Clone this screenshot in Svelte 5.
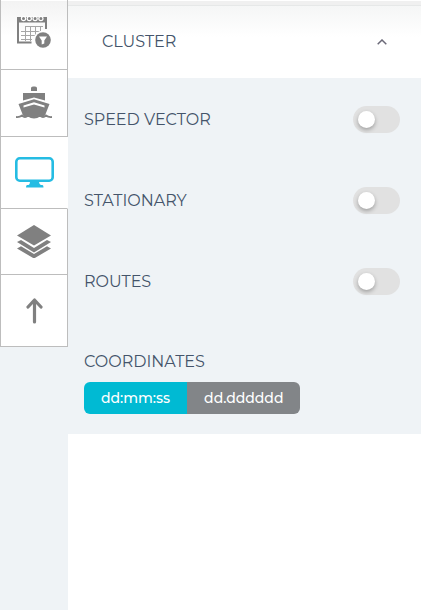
<script>
  let open = $state(true);
  let format = $state('dms');
  let layers = $state([
    { id: 'speed', label: 'SPEED VECTOR', on: false },
    { id: 'stationary', label: 'STATIONARY', on: false },
    { id: 'routes', label: 'ROUTES', on: false }
  ]);
</script>

<div class="app">
  <nav class="rail" aria-label="Map tools">
    <button class="tool date" aria-label="Date filter">
      <svg width="34" height="38" viewBox="0 0 34 38" fill="none">
        <path d="M1 2V26.500H14.500M29 3V13" stroke="#808080" stroke-width="2" />
        <path d="M0 1H30V6.500H0Z" fill="#808080" />
        <g fill="#808080" stroke="#fff" stroke-width="1.200">
          <circle cx="6.500" cy="2.500" r="2.100" />
          <circle cx="12.300" cy="2.500" r="2.100" />
          <circle cx="18.100" cy="2.500" r="2.100" />
          <circle cx="23.900" cy="2.500" r="2.100" />
        </g>
        <path d="M9 10.500H26M4 15.500H26M4 19.500H18M4 23.500H15M8.500 10V25M13.500 10V25M18.500 10V19M23.500 10V16" stroke="#a6a6a6" />
        <circle cx="26" cy="24" r="9.500" fill="#fff" />
        <circle cx="26" cy="24" r="7.800" fill="#808080" />
        <path d="M22 20.500H30L27.300 24.500V27.500L24.700 28.500V24.500Z" fill="#fff" />
      </svg>
    </button>
    <button class="tool ship" aria-label="Vessels">
      <svg width="36" height="34" viewBox="0 0 36 34" fill="#808080">
        <path d="M15 5V2Q15 .5 17 .5H19Q21 .5 21 2V5Z" />
        <path d="M7 7H29V14.500L18 11.500L7 14.500Z" />
        <path d="M2.500 18L18 13.200L33.500 18L29 29.500Q26.500 31.500 23.500 29.500Q18 33 12.500 29.500Q9.500 31.500 7 29.500Z" />
        <path d="M7.500 19.500L18 16.300L28.500 19.500V21.500L18 18.500L7.500 21.500Z" fill="#fff" />
        <path d="M0 31Q3.500 31.500 6 29.500Q9 32.500 12 29.500Q18 33.500 24 29.500Q27 32.500 30 29.500Q32.500 31.500 36 31" fill="none" stroke="#808080" stroke-width="1.800" />
      </svg>
    </button>
    <button class="tool screen active" aria-label="Display" aria-current="true">
      <svg width="39" height="31" viewBox="0 0 39 31">
        <rect x="1.300" y="1.300" width="36.400" height="22.400" rx="3.500" fill="none" stroke="#25bce3" stroke-width="2.600" />
        <path d="M15 24H24Q24 27.500 26 28H27.500Q28.500 28.300 28.500 30.500H11Q11 28.300 12 28H13.500Q15 27.500 15 24Z" fill="#25bce3" />
      </svg>
    </button>
    <button class="tool stack" aria-label="Layers">
      <svg width="34" height="33" viewBox="0 0 34 33" fill="#808080">
        <path d="M17 0L34 10.500L17 20.500L0 10.500Z" />
        <path d="M0 17L4 15L17 23L30 15L34 17L17 27.500Z" />
        <path d="M0 23.500L4 21.300L17 29L30 21.300L34 23.500L17 33.500Z" />
      </svg>
    </button>
    <button class="tool up" aria-label="Scroll up">
      <svg width="17" height="26" viewBox="0 0 17 26" fill="none" stroke="#808080" stroke-width="3.200" stroke-linecap="round" stroke-linejoin="round">
        <path d="M8.500 24V2M2 9L8.500 2L15 9" />
      </svg>
    </button>
  </nav>

  <main class="panel">
    <button class="heading" aria-expanded={open} onclick={() => (open = !open)}>
      <span>CLUSTER</span>
      <svg class:closed={!open} width="10" height="6" viewBox="0 0 10 6" fill="none" stroke="#6b6978" stroke-width="1.500">
        <path d="M.7 5.200L5 1L9.300 5.200" />
      </svg>
    </button>
    {#if open}
      <section class="options">
        {#each layers as layer (layer.id)}
          <div class="row">
            <label for={layer.id}>{layer.label}</label>
            <input id={layer.id} type="checkbox" role="switch" bind:checked={layer.on} />
          </div>
        {/each}
        <div class="coordinates" role="group" aria-labelledby="format-title">
          <span id="format-title">COORDINATES</span>
          <div class="segments">
            <button class:chosen={format === 'dms'} aria-pressed={format === 'dms'} onclick={() => (format = 'dms')}>dd:mm:ss</button>
            <button class:chosen={format === 'decimal'} aria-pressed={format === 'decimal'} onclick={() => (format = 'decimal')}>dd.dddddd</button>
          </div>
        </div>
      </section>
    {/if}
  </main>
</div>

<style>
  :global(body) {
    margin: 0;
    background: #fff;
  }
  .app {
    display: flex;
    min-height: 100vh;
    font: 400 16px/20px Montserrat, Inter, sans-serif;
    color: #44546a;
  }
  button {
    margin: 0;
    padding: 0;
    border: 0;
    font: inherit;
    color: inherit;
    cursor: pointer;
  }
  .rail {
    flex: none;
    width: 68px;
    background: #eff3f6;
  }
  .tool {
    box-sizing: border-box;
    display: flex;
    align-items: center;
    justify-content: center;
    width: 100%;
    border: solid #bdbdbd;
    border-width: 0 1px 1px;
    background: #fff;
  }
  .tool svg {
    display: block;
  }
  .date {
    height: 70px;
    background: linear-gradient(#fff 1px, #f3f3f3 1px, #fff 36px);
  }
  .ship {
    height: 67px;
  }
  .screen {
    height: 72px;
  }
  .active {
    border-right-color: #fff;
  }
  .stack {
    height: 66px;
  }
  .up {
    height: 72px;
  }
  .panel {
    flex: 1;
    min-width: 0;
  }
  .heading {
    box-sizing: border-box;
    display: flex;
    align-items: center;
    justify-content: space-between;
    width: 100%;
    height: 78px;
    padding: 5px 34px 0;
    border-top: 1px solid #fff;
    background: linear-gradient(#f0f0f0 4px, #e6e8e8 4px, #e6e8e8 5px, #f5f6f6 5px, #fff 36px);
  }
  .closed {
    transform: rotate(180deg);
  }
  .options {
    padding: 1px 21px 20px 16px;
    background: #eff3f6;
  }
  .row {
    display: flex;
    align-items: center;
    justify-content: space-between;
    height: 81px;
  }
  input {
    appearance: none;
    display: flex;
    align-items: center;
    box-sizing: border-box;
    width: 47px;
    height: 27px;
    margin: 0;
    padding: 0 5px;
    border-radius: 14px;
    background: #e1e1e1;
    cursor: pointer;
  }
  input::before {
    content: '';
    width: 17px;
    height: 17px;
    border-radius: 50%;
    background: #fff;
    box-shadow: 0 2px 4px rgba(0, 0, 0, 0.3);
  }
  input:checked {
    justify-content: flex-end;
    background: #00bad3;
  }
  .coordinates {
    display: flex;
    flex-direction: column;
    align-items: flex-start;
    gap: 10px;
    padding-top: 30px;
  }
  .segments {
    display: flex;
    overflow: hidden;
    border-radius: 6px;
  }
  .segments button {
    height: 32px;
    padding: 0 17px;
    background: #828588;
    color: #fff;
    font-size: 14px;
    font-weight: 500;
  }
  .segments .chosen {
    background: #00bad3;
  }
</style>
